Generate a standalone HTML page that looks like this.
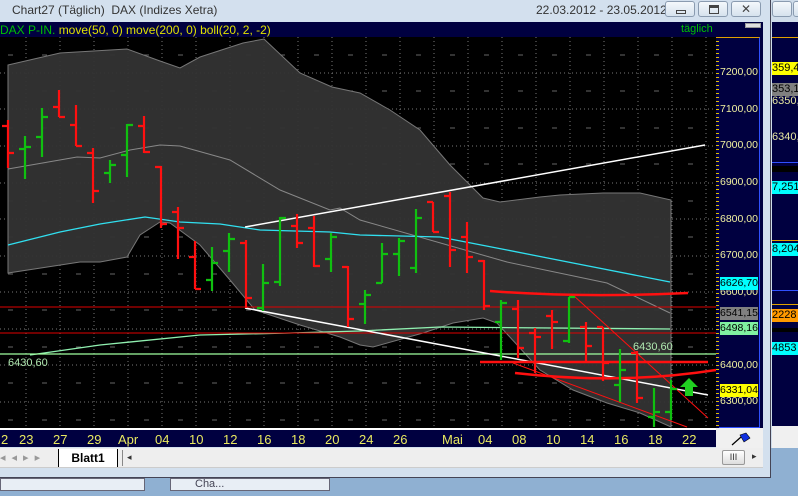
<!DOCTYPE html>
<html><head><meta charset="utf-8"><style>
*{margin:0;padding:0;box-sizing:border-box}
body{width:798px;height:496px;overflow:hidden;background:#8fb0d2;font-family:"Liberation Sans",sans-serif;position:relative}
.abs{position:absolute}
.btn{position:absolute;top:1px;height:16px;border:1px solid #8a9bb0;border-radius:3px;background:linear-gradient(#f4f8fc,#d6e2ee)}
</style></head><body>
<div class="abs" style="left:770px;top:0;width:28px;height:448px;background:#cfdcea;border-left:1px solid #555"></div>
<div class="btn" style="left:772px;width:20px"></div>
<div class="btn" style="left:793px;width:20px"></div>
<div class="abs" style="left:772px;top:22px;width:26px;height:404px;background:#000040"></div>
<div class="abs" style="left:772px;top:37px;width:26px;height:1px;background:#e0a000"></div>
<div class="abs" style="left:772px;top:162px;width:26px;height:1px;background:#3050ff"></div>
<div class="abs" style="left:772px;top:166px;width:26px;height:6px;background:#000"></div>
<div class="abs" style="left:772px;top:240px;width:26px;height:1px;background:#e0a000"></div>
<div class="abs" style="left:772px;top:290px;width:26px;height:1px;background:#3050ff"></div>
<div class="abs" style="left:772px;top:304px;width:26px;height:1px;background:#e0a000"></div>
<div class="abs" style="left:772px;top:328px;width:26px;height:4px;background:#000"></div>
<div style="position:absolute;left:772px;top:62px;font-size:11px;line-height:13px;color:#e8e8a0;white-space:nowrap">
<div class="abs" style="top:0;background:#ffff00;color:#000;width:26px">359,4</div>
<div class="abs" style="top:21px;background:#808080;color:#000;width:26px">353,1</div>
<div class="abs" style="top:33px">6350,</div>
<div class="abs" style="top:69px">6340,</div>
<div class="abs" style="top:119px;background:#00ffff;color:#000;width:26px">7,251</div>
<div class="abs" style="top:181px;background:#00ffff;color:#000;width:26px">8,204</div>
<div class="abs" style="top:247px;background:#ff9900;color:#000;width:26px">2228</div>
<div class="abs" style="top:280px;background:#00ffff;color:#000;width:26px">4853</div>
</div>
<div class="abs" style="left:772px;top:426px;width:26px;height:22px;background:#f0f0f0"></div>
<div class="abs" style="left:0;top:478px;width:145px;height:13px;background:#e8eef5;border:1px solid #667"></div>
<div class="abs" style="left:170px;top:478px;width:160px;height:13px;background:#e8eef5;border:1px solid #667;font-size:11px;color:#445;padding-left:24px;line-height:11px">Cha...</div>
<div class="abs" style="left:0;top:0;width:771px;height:478px;background:#d3e0ee;border-right:1px solid #445;border-bottom:1px solid #445"></div>
<div class="abs" style="left:12px;top:3px;font-size:12px;color:#333;white-space:pre">Chart27 (Täglich)  DAX (Indizes Xetra)</div>
<div class="abs" style="left:536px;top:3px;font-size:12px;color:#333">22.03.2012 - 23.05.2012</div>
<div class="btn" style="left:665px;width:30px"><div class="abs" style="left:10px;top:8px;width:10px;height:4px;border:1px solid #444"></div></div>
<div class="btn" style="left:698px;width:30px"><div class="abs" style="left:10px;top:3px;width:10px;height:9px;border:1px solid #444;border-top-width:3px"></div></div>
<div class="btn" style="left:731px;width:30px;font-size:12px;text-align:center;color:#444;line-height:14px">✕</div>
<div class="abs" style="left:0;top:22px;width:763px;height:406px;background:#000040"></div>
<div class="abs" style="left:0;top:23px;font-size:12px;white-space:pre;color:#00c000">DAX P-IN. <span style="color:#e0e000">move(50, 0) move(200, 0) boll(20, 2, -2)</span></div>
<div class="abs" style="left:681px;top:23px;font-size:11px;color:#00c000">täglich</div>
<div class="abs" style="left:745px;top:23px;width:16px;height:5px;background:#e0e0e0;border:1px solid #999"></div>
<div class="abs" style="left:716px;top:37px;width:44px;height:391px;border-top:1px solid #e0a000;border-left:1px solid #e0a000;border-right:1px solid #3050ff;border-bottom:1px solid #3050ff"></div>
<svg class="abs" style="left:0;top:37px" width="716" height="391" viewBox="0 37 716 391">
<rect x="0" y="37" width="716" height="391" fill="#000"/>
<g stroke="#777" stroke-width="1" stroke-dasharray="1,3">
<path d="M26 37V428M60 37V428M94 37V428M128 37V428M162 37V428M196 37V428M230 37V428M264 37V428M298 37V428M332 37V428M366 37V428M400 37V428M434 37V428M468 37V428M502 37V428M536 37V428M570 37V428M604 37V428M638 37V428M672 37V428M706 37V428"/>
<path d="M0 73H716M0 109H716M0 146H716M0 183H716M0 219H716M0 256H716M0 292H716M0 329H716M0 365H716M0 402H716"/>
</g>
<g stroke="#666" stroke-width="1" stroke-dasharray="5,29" stroke-dashoffset="-8">
<path d="M0 55H716M0 91H716M0 128H716M0 164H716M0 201H716M0 237H716M0 274H716M0 310H716M0 347H716M0 383H716M0 420H716"/>
</g>
<path d="M8 65L60 53L127 49L160 61L180 68L200 57L243 43L264 39L300 73L332 87L360 93L390 110L420 130L450 165L483 198L500 202L540 197L560 195L603 193L640 193L671 200L671 427L640 413L607 403L573 390L540 370L497 323L483 318L453 323L423 333L373 347L360 345L340 337L300 325L255 310L230 280L200 245L170 223L160 222L140 235L127 257L100 262L80 262L8 273Z" fill="#333" fill-opacity="0.95" stroke="#777" stroke-width="1"/>
<polyline points="8,169 77,157 100,158 130,150 160,145 180,146 230,160 280,190 330,210 340,208 360,220 507,262 607,283 670,313" fill="none" stroke="#888" stroke-width="1"/>
<polyline points="8,245 60,232 100,224 145,217 180,222 220,224 260,230 330,232 360,235 440,237 507,250 573,263 670,282" fill="none" stroke="#30e0f0" stroke-width="1.3"/>
<polyline points="30,355 100,345 200,335 290,333 360,331 440,327 670,329" fill="none" stroke="#90f0b0" stroke-width="1.3"/>
<path d="M0 354H716" stroke="#a0ffa0" stroke-width="1.2"/>
<path d="M0 307H716M0 333H716" stroke="#e00000" stroke-width="1"/>
<path d="M245 227L705 145" stroke="#fff" stroke-width="1.5"/>
<path d="M245 308L708 395" stroke="#fff" stroke-width="1.5"/>
<g fill="none" stroke="#ff1010" stroke-width="2.5">
<path d="M490 291Q580 298 688 293"/>
<path d="M480 362H708"/>
<path d="M515 373Q620 385 716 370"/>
</g>
<path d="M573 295L708 418M513 363L687 427" stroke="#ff1010" stroke-width="1"/>
<g fill="none" stroke-width="2.2">
<g stroke="#ff1010">
<path d="M8 120V168M2 126H8M8 153H14"/>
<path d="M59 90V117M53 107H59M59 117H65"/>
<path d="M76 105V146M70 125H76M76 146H82"/>
<path d="M93 148V203M87 153H93M93 191H99"/>
<path d="M144 116V153M138 126H144M144 152H150"/>
<path d="M161 166V228M155 167H161M161 224H167"/>
<path d="M178 207V259M172 212H178M178 228H184"/>
<path d="M195 241V289M189 257H195M195 289H201"/>
<path d="M246 240V308M240 243H246M246 298H252"/>
<path d="M297 214V248M291 226H297M297 243H303"/>
<path d="M314 216V267M308 228H314M314 266H320"/>
<path d="M348 266V327M342 267H348M348 319H354"/>
<path d="M433 202V232M427 202H433M433 232H439"/>
<path d="M450 192V267M444 196H450M450 250H456"/>
<path d="M467 222V273M461 237H467M467 257H473"/>
<path d="M484 260V310M478 261H484M484 306H490"/>
<path d="M518 300V358M512 309H518M518 348H524"/>
<path d="M535 328V373M529 333H535M535 337H541"/>
<path d="M552 310V349M546 316H552M552 322H558"/>
<path d="M586 322V362M580 327H586M586 346H592"/>
<path d="M603 327V381M597 327H603M603 363H609"/>
<path d="M637 351V403M631 353H637M637 398H643"/>
</g>
<g stroke="#10c010">
<path d="M25 136V179M19 149H25M25 147H31"/>
<path d="M42 108V157M36 137H42M42 117H48"/>
<path d="M110 160V183M104 173H110M110 165H116"/>
<path d="M127 124V177M121 155H127M127 125H133"/>
<path d="M212 247V291M206 280H212M212 263H218"/>
<path d="M229 233V272M223 251H229M229 239H235"/>
<path d="M263 264V311M257 308H263M263 283H269"/>
<path d="M280 217V286M274 282H280M280 218H286"/>
<path d="M331 233V272M325 259H331M331 237H337"/>
<path d="M365 290V324M359 304H365M365 295H371"/>
<path d="M382 243V283M376 283H382M382 254H388"/>
<path d="M399 238V276M393 254H399M399 241H405"/>
<path d="M416 209V273M410 268H416M416 218H422"/>
<path d="M501 300V360M495 322H501M501 303H507"/>
<path d="M569 297V343M563 341H569M569 297H575"/>
<path d="M620 349V402M614 385H620M620 370H626"/>
<path d="M654 388V427M648 417H654M654 412H660"/>
<path d="M671 380V420M665 412H671M671 389H677"/>
</g>
</g>
<path d="M689 378L698 387H693V396H685V387H680Z" fill="#20d020"/>
<text x="8" y="366" font-size="11" fill="#b0e8b0" font-family="Liberation Sans">6430,60</text>
<text x="633" y="350" font-size="11" fill="#b0e8b0" font-family="Liberation Sans">6430,60</text>
</svg>
<div class="abs" style="left:716px;top:38px;width:3px;height:390px;background:repeating-linear-gradient(#000040 0 3px,#e0c000 3px 4px);"></div>
<div style="position:absolute;left:720px;top:0;font-size:10.5px;color:#f0f0a0;line-height:13px;white-space:nowrap">
<div class="abs" style="top:66px">7200,00</div>
<div class="abs" style="top:103px">7100,00</div>
<div class="abs" style="top:139px">7000,00</div>
<div class="abs" style="top:176px">6900,00</div>
<div class="abs" style="top:213px">6800,00</div>
<div class="abs" style="top:249px">6700,00</div>
<div class="abs" style="top:286px">6600,00</div>
<div class="abs" style="top:359px">6400,00</div>
<div class="abs" style="top:395px">6300,00</div>
<div class="abs" style="top:277px;background:#00ffff;color:#000;width:38px">6626,70</div>
<div class="abs" style="top:307px;background:#808080;color:#000;width:38px">6541,15</div>
<div class="abs" style="top:322px;background:#80f0a0;color:#000;width:38px">6498,16</div>
<div class="abs" style="top:384px;background:#ffff00;color:#000;width:38px">6331,04</div>
</div>
<div class="abs" style="left:0;top:428px;width:716px;height:19px;background:#000040;border-top:2px solid #fff"></div>
<div style="position:absolute;left:0;top:432px;font-size:13px;color:#e8e860;white-space:nowrap">
<span class="abs" style="left:1px">2</span><span class="abs" style="left:19px">23</span><span class="abs" style="left:53px">27</span><span class="abs" style="left:87px">29</span><span class="abs" style="left:118px">Apr</span><span class="abs" style="left:155px">04</span><span class="abs" style="left:189px">10</span><span class="abs" style="left:223px">12</span><span class="abs" style="left:257px">16</span><span class="abs" style="left:291px">18</span><span class="abs" style="left:325px">20</span><span class="abs" style="left:359px">24</span><span class="abs" style="left:393px">26</span><span class="abs" style="left:442px">Mai</span><span class="abs" style="left:478px">04</span><span class="abs" style="left:512px">08</span><span class="abs" style="left:546px">10</span><span class="abs" style="left:580px">14</span><span class="abs" style="left:614px">16</span><span class="abs" style="left:648px">18</span><span class="abs" style="left:682px">22</span>
</div>
<div class="abs" style="left:716px;top:428px;width:47px;height:21px;background:#f0f0f0"></div>
<svg class="abs" style="left:730px;top:432px" width="24" height="14"><path d="M2 13L11 5" stroke="#000" stroke-width="1.2"/><path d="M10 3L16 1L20 6L14 10Z" fill="#1030e0" stroke="#000" stroke-width="0.6"/></svg>
<div class="abs" style="left:0;top:448px;width:763px;height:20px;background:#eeeeee;border-bottom:1px solid #ccc"></div>
<div class="abs" style="left:0;top:450px;width:55px;height:17px;color:#999;font-size:11px;letter-spacing:6px;line-height:17px">◂◂▸▸</div>
<div class="abs" style="left:58px;top:449px;width:60px;height:18px;background:#fff;border-left:1px solid #000;border-right:1px solid #000;font-size:12px;font-weight:bold;text-align:center;line-height:18px">Blatt1</div>
<div class="abs" style="left:122px;top:450px;width:1px;height:16px;background:#888"></div>
<div class="abs" style="left:127px;top:452px;font-size:9px;color:#333">◂</div>
<div class="abs" style="left:722px;top:450px;width:23px;height:15px;border:1px solid #999;border-radius:2px;background:linear-gradient(#fff,#ddd);font-size:9px;text-align:center;line-height:13px;color:#333">III</div>
<div class="abs" style="left:752px;top:451px;font-size:9px;color:#333">▸</div>
</body></html>
